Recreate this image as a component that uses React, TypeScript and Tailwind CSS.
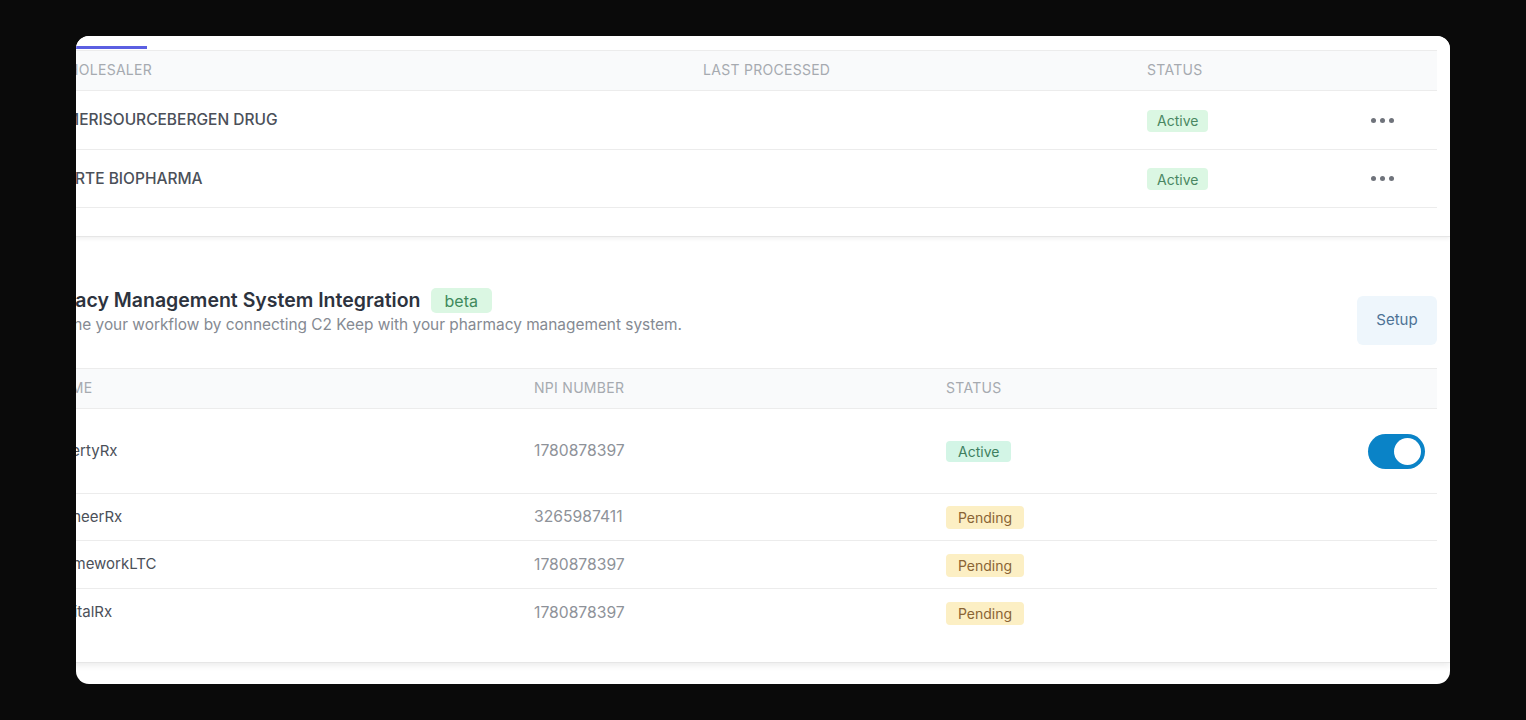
import React from 'react';

type Wholesaler = { name: string; lastProcessed: string; status: 'Active' };
type Pms = { name: string; npi: string; status: 'Active' | 'Pending'; enabled?: boolean };

const wholesalers: Wholesaler[] = [
  { name: 'AMERISOURCEBERGEN DRUG', lastProcessed: '', status: 'Active' },
  { name: 'FORTE BIOPHARMA', lastProcessed: '', status: 'Active' },
];

const systems: Pms[] = [
  { name: 'LibertyRx', npi: '1780878397', status: 'Active', enabled: true },
  { name: 'PioneerRx', npi: '3265987411', status: 'Pending' },
  { name: 'FrameworkLTC', npi: '1780878397', status: 'Pending' },
  { name: 'DigitalRx', npi: '1780878397', status: 'Pending' },
];

function MoreDots() {
  return (
    <div className="flex items-center gap-1">
      <span className="w-[5px] h-[5px] rounded-full bg-[#6f737b]" />
      <span className="w-[5px] h-[5px] rounded-full bg-[#6f737b]" />
      <span className="w-[5px] h-[5px] rounded-full bg-[#6f737b]" />
    </div>
  );
}

function Toggle({ on }: { on: boolean }) {
  return (
    <div
      className={`w-[57px] h-[35px] rounded-full p-1 flex items-center ${
        on ? 'bg-[#0a83c7] justify-end' : 'bg-gray-300 justify-start'
      }`}
    >
      <div className="w-[27px] h-[27px] rounded-full bg-white" />
    </div>
  );
}

function StatusPill({ status, tone }: { status: string; tone: 'green' | 'mint' | 'amber' }) {
  const tones = {
    green: 'bg-[#dbf7e3] text-[#4a8762] h-[22px] px-2.5',
    mint: 'bg-[#d3f5e6] text-[#3f7f5f] h-[21px] px-3',
    amber: 'bg-[#fcefc4] text-[#8a6434] h-[23px] px-3',
  };
  return (
    <span className={`inline-flex items-center rounded-[4px] text-[14px] ${tones[tone]}`}>
      {status}
    </span>
  );
}

export default function App() {
  return (
    <div className="min-h-screen bg-[#0a0a0a] pt-[36px] pl-[76px] font-['Inter',sans-serif]">
      <div className="w-[1374px] h-[648px] rounded-[13px] overflow-hidden bg-white">
        <div className="ml-[-62px]">
          {/* Wholesalers */}
          <section className="bg-white pr-[13px] pb-[28px] border-b border-[#e6e6e6] shadow-[0_2px_4px_rgba(0,0,0,0.06)] relative z-10">
            <div className="h-[14px] flex">
              <div className="w-[133px] h-[13px] border-b-[3px] border-[#5b5fe2]" />
            </div>
            <div className="ml-[18px] border-t border-[#ececec]">
              <div className="grid grid-cols-[647px_444px_200px_1fr] h-10 pb-[2px] items-center bg-[#f9fafb] border-b border-[#ececec] text-[14px] tracking-[0.02em] text-[#a6aab0] uppercase">
                <div className="pl-[22px]">Wholesaler</div>
                <div className="px-6">Last Processed</div>
                <div className="px-6">Status</div>
                <div />
              </div>
              {wholesalers.map((w, i) => (
                <div
                  key={w.name}
                  className={`grid grid-cols-[647px_444px_200px_1fr] items-center border-b border-[#ececec] ${
                    i === 0 ? 'h-[59px]' : 'h-[58px]'
                  }`}
                >
                  <div className="pl-[22px] text-[15.5px] font-medium text-[#4b5059]">{w.name}</div>
                  <div className="px-6 text-[15px] text-[#8e9299]">{w.lastProcessed}</div>
                  <div className="px-6">
                    <StatusPill status={w.status} tone="green" />
                  </div>
                  <div className="pl-12">
                    <MoreDots />
                  </div>
                </div>
              ))}
            </div>
          </section>

          {/* Pharmacy management systems */}
          <section className="bg-white pr-[13px] pt-[51px] pb-[26px] border-b border-[#e6e6e6] shadow-[0_3px_6px_rgba(0,0,0,0.07)] relative">
            <div className="flex items-start justify-between">
              <div>
                <div className="flex items-center gap-2.5">
                  <h2 className="text-[19.5px] leading-[25px] font-semibold text-[#2d333e]">
                    Pharmacy Management System Integration
                  </h2>
                  <span className="inline-flex items-center h-[25px] px-3.5 rounded-[5px] bg-[#dbf7e3] text-[16px] text-[#3f8a5c]">
                    beta
                  </span>
                </div>
                <p className="mt-[2px] text-[15.4px] leading-5 text-[#858a92]">
                  Streamline your workflow by connecting C2 Keep with your pharmacy management system.
                </p>
              </div>
              <button className="mt-2 w-[80px] h-[49px] rounded-md bg-[#eef6fc] text-[15px] text-[#4d7295]">
                Setup
              </button>
            </div>

            <div className="ml-[18px] mt-[23px] border-t border-[#ececec]">
              <div className="grid grid-cols-[478px_412px_300px_1fr] h-10 pb-[2px] items-center bg-[#f9fafb] border-b border-[#ececec] text-[14px] tracking-[0.02em] text-[#a6aab0] uppercase">
                <div className="pl-[18px]">Name</div>
                <div className="px-6">NPI Number</div>
                <div className="px-6">Status</div>
                <div />
              </div>
              {systems.map((s, i) => (
                <div
                  key={s.name}
                  className={`grid grid-cols-[478px_412px_300px_1fr] items-center ${
                    i === 0 ? 'h-[85px]' : i === 2 ? 'h-[48px]' : 'h-[47px]'
                  } ${i < systems.length - 1 ? 'border-b border-[#ececec]' : ''}`}
                >
                  <div className="pl-[18px] text-[15px] text-[#4b5059]">{s.name}</div>
                  <div className="px-6 text-[15.7px] text-[#8e9299]">{s.npi}</div>
                  <div className="px-6">
                    <StatusPill status={s.status} tone={s.status === 'Active' ? 'mint' : 'amber'} />
                  </div>
                  <div className="flex justify-end pr-3">
                    {s.enabled !== undefined && <Toggle on={s.enabled} />}
                  </div>
                </div>
              ))}
            </div>
          </section>
        </div>
      </div>
    </div>
  );
}
